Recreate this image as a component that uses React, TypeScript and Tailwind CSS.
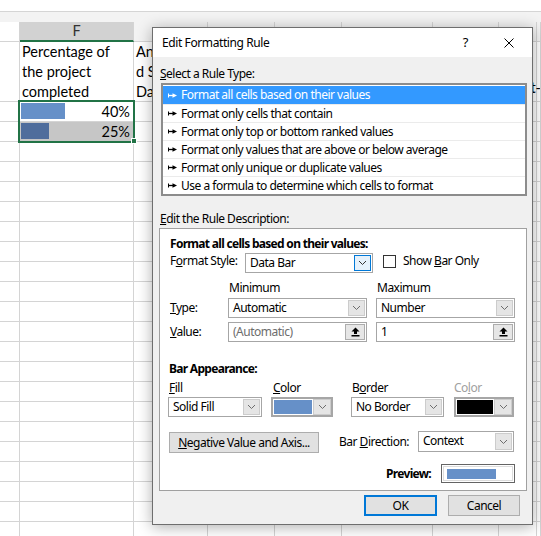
import React from 'react';

// sheet column widths (E .. M), right border drawn inside each width
const COLS = ['w-[20px]', 'w-[114px]', 'w-[74px]', 'w-[67px]', 'w-[67px]', 'w-[91px]', 'w-[66px]', 'w-[38px]', 'flex-1'];

function GridRow({ h, cells = {} }: { h: string; cells?: Record<number, React.ReactNode> }) {
  return (
    <div className={`flex shrink-0 ${h}`}>
      {COLS.map((w, i) => (
        <div key={i} className={`${w} relative shrink-0 border-b border-r border-[#d4d4d4]`}>
          {cells[i]}
        </div>
      ))}
    </div>
  );
}

function Chevron({ dark }: { dark?: boolean }) {
  return (
    <svg width="9" height="6" viewBox="0 0 9 6">
      <path d="M1 1l3.5 3.5L8 1" fill="none" stroke={dark ? '#333' : '#6d6d6d'} strokeWidth="1" />
    </svg>
  );
}

function DropBtn({ focus }: { focus?: boolean }) {
  return (
    <div
      className={`flex w-[17px] shrink-0 items-center justify-center border ${
        focus ? 'border-[#0078d7] bg-[#e5f1fb]' : 'border-[#cccccc] bg-[#e5e5e5]'
      }`}
    >
      <Chevron dark={focus} />
    </div>
  );
}

function Combo({ className, text, focus }: { className: string; text: string; focus?: boolean }) {
  return (
    <div className={`flex h-[20px] shrink-0 border border-[#a6a6a6] bg-white p-px ${className}`}>
      <div className="flex-1 truncate pl-[3px] leading-[16px]">{text}</div>
      <DropBtn focus={focus} />
    </div>
  );
}

function ColorCombo({ className, swatch }: { className: string; swatch: string }) {
  return (
    <div className={`flex h-[20px] shrink-0 border-2 border-[#a6a6a6] bg-white ${className}`}>
      <div className={`my-px ml-px flex-1 ${swatch}`} />
      <div className="ml-px flex w-[18px] shrink-0 items-center justify-center border border-[#cccccc] bg-[#e5e5e5]">
        <Chevron />
      </div>
    </div>
  );
}

function UpArrow() {
  return (
    <svg width="9" height="10" viewBox="0 0 9 10">
      <path d="M4.5 0.5L8.5 4.5H6V7H3V4.5H0.5Z" fill="#000" />
      <rect x="0.5" y="8" width="8" height="1.5" fill="#000" />
    </svg>
  );
}

function ValueField({ text, muted }: { text: string; muted?: boolean }) {
  return (
    <div className="flex h-[20px] w-[139px] shrink-0 border border-[#a6a6a6] bg-white p-px">
      <div className={`flex-1 pl-[3px] leading-[16px] ${muted ? 'text-[#6d6d6d]' : ''}`}>{text}</div>
      <div className="flex w-[20px] items-center justify-center border border-[#adadad] bg-[#e6e6e6]">
        <UpArrow />
      </div>
    </div>
  );
}

function RuleArrow({ color }: { color: string }) {
  return (
    <svg width="9" height="7" viewBox="0 0 9 7" className="shrink-0">
      <path d="M0.5 1.5v4" stroke={color} strokeWidth="1" />
      <path d="M0.5 3.5h4.5" stroke={color} strokeWidth="1.3" />
      <path d="M4.5 1.2L9 3.5L4.5 5.8Z" fill={color} />
    </svg>
  );
}

const RULES = [
  'Format all cells based on their values',
  'Format only cells that contain',
  'Format only top or bottom ranked values',
  'Format only values that are above or below average',
  'Format only unique or duplicate values',
  'Use a formula to determine which cells to format',
];

function Dialog() {
  return (
    <div className="absolute left-[152px] top-[27px] flex h-[498px] w-[381px] flex-col border border-[#6e6e6e] bg-[#f0f0f0] text-[12px] tracking-[-0.5px] text-black shadow-[0_2px_14px_rgba(0,0,0,0.32)]">
      {/* title bar */}
      <div className="flex h-[29px] shrink-0 items-center bg-white pl-[9px] tracking-[-0.4px]">
        <span>Edit Formatting Rule</span>
        <span className="ml-auto text-[13px]">?</span>
        <svg width="10" height="10" viewBox="0 0 10 10" className="ml-[36px] mr-[18px]">
          <path d="M0.5 0.5l9 9M9.5 0.5l-9 9" stroke="#000" strokeWidth="1" />
        </svg>
      </div>

      <div className="ml-[7px] mt-[9px] h-[16px] leading-[16px]">
        <u>S</u>elect a Rule Type:
      </div>
      <div className="ml-[8px] mt-px flex h-[113px] w-[366px] flex-col border-2 border-[#8c8c8c] bg-white pt-px">
        {RULES.map((r, i) => (
          <div
            key={r}
            className={`flex h-[18px] shrink-0 items-center pl-[5px] ${
              i === 0 ? 'bg-[#3399ff] text-white' : 'border-t border-[#ebebeb]'
            }`}
          >
            <RuleArrow color={i === 0 ? '#fff' : '#000'} />
            <span className="ml-[4px] leading-[16px]">{r}</span>
          </div>
        ))}
      </div>

      <div className="ml-[7px] mt-[15px] h-[16px] leading-[16px]">
        <u>E</u>dit the Rule Description:
      </div>
      <div className="ml-[6px] mt-px flex h-[263px] w-[368px] flex-col border border-[#a0a0a0] bg-white">
        <div className="mt-[7px] h-[16px] pl-[10px] font-bold leading-[16px] tracking-[-0.7px]">
          Format all cells based on their values:
        </div>
        <div className="mt-px flex h-[20px]">
          <div className="w-[85px] shrink-0 pl-[10px] leading-[16px]">
            F<u>o</u>rmat Style:
          </div>
          <Combo className="w-[128px]" text="Data Bar" focus />
          <div className="ml-[10px] mt-[2px] h-[13px] w-[13px] border border-[#333] bg-white" />
          <div className="ml-[7px] leading-[16px]">
            Show <u>B</u>ar Only
          </div>
        </div>
        <div className="mt-[7px] flex h-[16px] leading-[16px]">
          <div className="ml-[68px] w-[148px] pl-px">Minimum</div>
          <div className="pl-px">Maximum</div>
        </div>
        <div className="mt-[2px] flex h-[20px]">
          <div className="w-[68px] shrink-0 pl-[10px] leading-[20px]">
            <u>T</u>ype:
          </div>
          <Combo className="w-[139px]" text="Automatic" />
          <Combo className="ml-[9px] w-[139px]" text="Number" />
        </div>
        <div className="mt-[4px] flex h-[20px]">
          <div className="w-[68px] shrink-0 pl-[10px] leading-[20px]">
            <u>V</u>alue:
          </div>
          <ValueField text="(Automatic)" muted />
          <div className="ml-[9px]">
            <ValueField text="1" />
          </div>
        </div>

        <div className="mt-[19px] h-[16px] pl-[9px] font-bold leading-[16px] tracking-[-0.7px]">Bar Appearance:</div>
        <div className="mt-[3px] flex h-[16px] leading-[16px]">
          <div className="ml-[8px] w-[103px] pl-px">
            <u>F</u>ill
          </div>
          <div className="w-[80px] pl-[2px]">
            <u>C</u>olor
          </div>
          <div className="w-[103px] pl-px">
            B<u>o</u>rder
          </div>
          <div className="text-[#a0a0a0]">
            Co<u>l</u>or
          </div>
        </div>
        <div className="mt-px flex h-[20px]">
          <div className="ml-[8px] w-[103px]">
            <Combo className="w-[94px]" text="Solid Fill" />
          </div>
          <div className="w-[80px]">
            <ColorCombo className="w-[62px]" swatch="bg-[#6690c8]" />
          </div>
          <div className="w-[103px]">
            <Combo className="w-[93px]" text="No Border" />
          </div>
          <ColorCombo className="w-[60px]" swatch="bg-black" />
        </div>

        <div className="mt-[14px] flex h-[22px] items-start">
          <div className="ml-[9px] mt-px flex h-[21px] w-[150px] items-center justify-center border border-[#adadad] bg-[#e1e1e1]">
            <span>
              <u>N</u>egative Value and Axis...
            </span>
          </div>
          <div className="ml-[20px] w-[79px] pt-[3px] leading-[16px]">
            Bar <u>D</u>irection:
          </div>
          <Combo className="h-[21px] w-[96px]" text="Context" />
        </div>

        <div className="mt-[11px] flex h-[19px] items-center justify-end">
          <span className="font-bold tracking-[-0.7px]">Preview:</span>
          <div className="ml-[10px] mr-[11px] flex h-[19px] w-[74px] items-center border border-[#646464] bg-white p-px">
            <div className="flex h-full w-full items-center border border-[#dcdcdc] pl-[3px]">
              <div className="h-[10px] w-[49px] bg-[#6690c8]" />
            </div>
          </div>
        </div>
      </div>

      <div className="mt-[4px] flex justify-end">
        <div className="flex h-[21px] w-[73px] items-center justify-center border-2 border-[#0078d7] bg-[#e1e1e1]">OK</div>
        <div className="ml-[11px] mr-[12px] flex h-[21px] w-[72px] items-center justify-center border border-[#adadad] bg-[#e1e1e1]">
          Cancel
        </div>
      </div>
    </div>
  );
}

export default function App() {
  const cellFont = "font-['Lato','Carlito',sans-serif] text-[14.5px]";
  return (
    <div className="relative h-[536px] w-[541px] overflow-hidden bg-white font-['Noto_Sans','Open_Sans',sans-serif]">
      <div className="flex h-full flex-col">
        <div className="h-[12px] shrink-0 border-b border-[#d5d5d5] bg-white" />
        <div className="h-[10px] shrink-0 bg-[#f3f3f3]" />
        {/* column headers */}
        <div className="flex h-[20px] shrink-0">
          {COLS.map((w, i) => (
            <div
              key={i}
              className={`${w} flex shrink-0 items-center justify-center border-r ${
                i === 1
                  ? 'border-b-2 border-[#d4d4d4] border-b-[#217346] bg-[#d2d2d2]'
                  : i === 0
                  ? 'border-b border-[#d4d4d4] bg-white'
                  : 'border-b border-[#d4d4d4] bg-[#f3f3f3]'
              }`}
            >
              {i === 1 && <span className={`${cellFont} text-[#333]`}>F</span>}
            </div>
          ))}
        </div>
        <GridRow
          h="h-[60px]"
          cells={{
            1: (
              <div className={`pl-[2px] leading-[20px] ${cellFont}`}>
                <div>Percentage of</div>
                <div>the project</div>
                <div>completed</div>
              </div>
            ),
            2: (
              <div className={`whitespace-nowrap pl-[2px] leading-[20px] ${cellFont}`}>
                <div>An</div>
                <div>d S</div>
                <div>Da</div>
              </div>
            ),
            7: (
              <div className={`-mr-[5px] flex justify-end whitespace-nowrap pt-[36px] leading-[20px] ${cellFont}`}>t-</div>
            ),
          }}
        />
        <GridRow
          h="h-[20px]"
          cells={{
            1: (
              <div className="relative h-full">
                <div className="absolute left-px top-px h-[16px] w-[44px] bg-[#6690c8]" />
                <div className={`relative pr-[3px] text-right leading-[19px] ${cellFont}`}>40%</div>
              </div>
            ),
          }}
        />
        <GridRow
          h="h-[20px]"
          cells={{
            1: (
              <div className="relative h-full bg-[#c6c6c6]">
                <div className="absolute left-px top-px h-[16px] w-[28px] bg-[#4f6d9c]" />
                <div className={`relative pr-[3px] text-right leading-[19px] ${cellFont}`}>25%</div>
              </div>
            ),
          }}
        />
        {Array.from({ length: 20 }).map((_, i) => (
          <GridRow key={i} h="h-[20px]" />
        ))}
      </div>

      {/* selection F2:F3 */}
      <div className="absolute left-[18px] top-[100px] h-[43px] w-[117px] border-2 border-[#217346]" />
      <div className="absolute left-[131px] top-[138px] h-[6px] w-[6px] border border-white bg-[#217346]" />

      <Dialog />
    </div>
  );
}
